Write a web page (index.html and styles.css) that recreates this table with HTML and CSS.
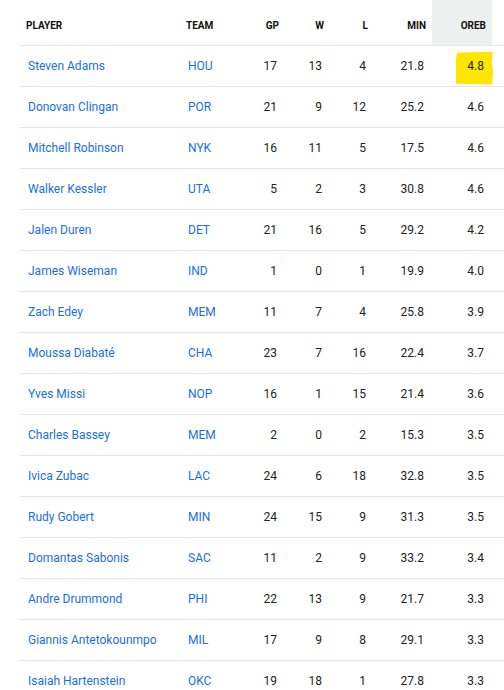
FILE: index.html
```html
<!DOCTYPE html>
<html>
<head>
<meta charset="utf-8">
<link rel="stylesheet" href="styles.css">
</head>
<body>
<div class="wrap">
<table class="stats">
<colgroup>
<col class="c-player"><col class="c-team"><col class="c-gp"><col class="c-w"><col class="c-l"><col class="c-min"><col class="c-oreb"><col class="c-extra">
</colgroup>
<thead>
<tr><th class="left">PLAYER</th><th class="left">TEAM</th><th>GP</th><th>W</th><th>L</th><th>MIN</th><th class="sorted">OREB</th><th class="extra"></th></tr>
</thead>
<tbody>
<tr><td class="left"><a>Steven Adams</a></td><td class="left"><a>HOU</a></td><td>17</td><td>13</td><td>4</td><td>21.8</td><td class="hl"><span>4.8</span></td><td></td></tr>
<tr><td class="left"><a>Donovan Clingan</a></td><td class="left"><a>POR</a></td><td>21</td><td>9</td><td>12</td><td>25.2</td><td>4.6</td><td></td></tr>
<tr><td class="left"><a>Mitchell Robinson</a></td><td class="left"><a>NYK</a></td><td>16</td><td>11</td><td>5</td><td>17.5</td><td>4.6</td><td></td></tr>
<tr><td class="left"><a>Walker Kessler</a></td><td class="left"><a>UTA</a></td><td>5</td><td>2</td><td>3</td><td>30.8</td><td>4.6</td><td></td></tr>
<tr><td class="left"><a>Jalen Duren</a></td><td class="left"><a>DET</a></td><td>21</td><td>16</td><td>5</td><td>29.2</td><td>4.2</td><td></td></tr>
<tr><td class="left"><a>James Wiseman</a></td><td class="left"><a>IND</a></td><td>1</td><td>0</td><td>1</td><td>19.9</td><td>4.0</td><td></td></tr>
<tr><td class="left"><a>Zach Edey</a></td><td class="left"><a>MEM</a></td><td>11</td><td>7</td><td>4</td><td>25.8</td><td>3.9</td><td></td></tr>
<tr><td class="left"><a>Moussa Diabaté</a></td><td class="left"><a>CHA</a></td><td>23</td><td>7</td><td>16</td><td>22.4</td><td>3.7</td><td></td></tr>
<tr><td class="left"><a>Yves Missi</a></td><td class="left"><a>NOP</a></td><td>16</td><td>1</td><td>15</td><td>21.4</td><td>3.6</td><td></td></tr>
<tr><td class="left"><a>Charles Bassey</a></td><td class="left"><a>MEM</a></td><td>2</td><td>0</td><td>2</td><td>15.3</td><td>3.5</td><td></td></tr>
<tr><td class="left"><a>Ivica Zubac</a></td><td class="left"><a>LAC</a></td><td>24</td><td>6</td><td>18</td><td>32.8</td><td>3.5</td><td></td></tr>
<tr><td class="left"><a>Rudy Gobert</a></td><td class="left"><a>MIN</a></td><td>24</td><td>15</td><td>9</td><td>31.3</td><td>3.5</td><td></td></tr>
<tr><td class="left"><a>Domantas Sabonis</a></td><td class="left"><a>SAC</a></td><td>11</td><td>2</td><td>9</td><td>33.2</td><td>3.4</td><td></td></tr>
<tr><td class="left"><a>Andre Drummond</a></td><td class="left"><a>PHI</a></td><td>22</td><td>13</td><td>9</td><td>21.7</td><td>3.3</td><td></td></tr>
<tr><td class="left"><a>Giannis Antetokounmpo</a></td><td class="left"><a>MIL</a></td><td>17</td><td>9</td><td>8</td><td>29.1</td><td>3.3</td><td></td></tr>
<tr><td class="left"><a>Isaiah Hartenstein</a></td><td class="left"><a>OKC</a></td><td>19</td><td>18</td><td>1</td><td>27.8</td><td>3.3</td><td></td></tr>
</tbody>
</table>
</div>
</body>
</html>
```

FILE: styles.css
```css
html, body {
  margin: 0;
  padding: 0;
  background: #ffffff;
}
body {
  font-family: Roboto, "Liberation Sans", Arial, sans-serif;
  overflow: hidden;
}
.wrap {
  padding-left: 20px;
}
.stats {
  width: 484px;
  border-collapse: collapse;
  table-layout: fixed;
}
.c-player { width: 160px; }
.c-team { width: 60px; }
.c-gp { width: 45px; }
.c-w { width: 45px; }
.c-l { width: 44px; }
.c-min { width: 58px; }
.c-oreb { width: 60px; }
.c-extra { width: 12px; }

.stats th {
  height: 45px;
  box-sizing: border-box;
  padding: 6px 6px 0 6px;
  font-size: 10px;
  font-weight: 700;
  color: #111111;
  text-align: right;
  vertical-align: middle;
  border-bottom: 1px solid #e6e6e6;
}
.stats th.sorted {
  background: #eeefef;
}
.stats td {
  height: 40px;
  padding: 0 8px;
  font-size: 12px;
  color: #222222;
  text-align: right;
  vertical-align: middle;
  border-bottom: 1px solid #e6e6e6;
  white-space: nowrap;
}
.stats .left {
  text-align: left;
}
.stats td a {
  color: #1a6fe0;
  text-decoration: none;
}
.stats td.hl {
  position: relative;
}
.stats td.hl::before {
  content: "";
  position: absolute;
  left: 24px;
  top: 6px;
  width: 37px;
  height: 33px;
  background: #ffe600;
  clip-path: polygon(3% 4%, 100% 0%, 96% 30%, 100% 60%, 98% 100%, 0% 98%, 0% 20%);
}
.stats td.hl span {
  position: relative;
}
```
